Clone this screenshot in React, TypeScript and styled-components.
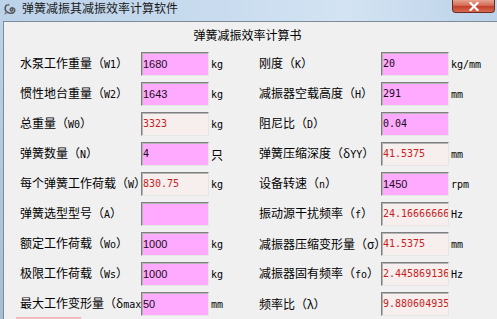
import React from "react";
import styled, { createGlobalStyle } from "styled-components";

const GlobalStyle = createGlobalStyle`
  html, body { margin: 0; padding: 0; background: #f0f0f0; }
  body { font-family: "Noto Sans CJK SC", "Noto Sans", sans-serif; }
`;

const Window = styled.div`
  width: 497px;
  height: 319px;
  overflow: hidden;
  display: flex;
  flex-direction: column;
  background: #f0f0f0;
`;

const TitleBar = styled.div`
  height: 21px;
  flex: none;
  display: flex;
  align-items: flex-start;
  background: linear-gradient(to right, #bcd2e9 0%, #c9dcef 45%, #d3e3f3 70%, #bcd2e9 100%);
`;

const AppIcon = styled.svg`
  width: 14px;
  height: 14px;
  margin: 2px 0 0 3px;
  flex: none;
`;

const TitleText = styled.span`
  margin: 1px 0 0 5px;
  font-size: 12px;
  line-height: 14px;
  color: #1a1a1a;
  white-space: nowrap;
`;

const CloseButton = styled.div`
  margin-left: auto;
  margin-right: 2px;
  width: 43px;
  height: 13px;
  flex: none;
  box-sizing: border-box;
  border: 1px solid #6e2b23;
  border-top: none;
  border-radius: 0 0 4px 4px;
  background: linear-gradient(to bottom, #e8a491 0%, #d46a55 45%, #c2412b 55%, #d86a4f 100%);
  display: flex;
  align-items: center;
  justify-content: center;
`;

const Body = styled.div`
  flex: 1;
  display: flex;
  min-height: 0;
`;

const FrameEdge = styled.div`
  width: 3px;
  flex: none;
  background: linear-gradient(to bottom, #bcd2e9, #a9bdd2);
`;

const Client = styled.div`
  flex: 1;
  border-top: 1px solid #7d8a99;
  border-left: 1px solid #7d8a99;
  background: #f0f0f0;
  display: flex;
  flex-direction: column;
`;

const Heading = styled.div`
  padding-top: 6px;
  height: 14px;
  line-height: 14px;
  font-size: 12px;
  color: #000;
  text-align: center;
  margin-bottom: 10px;
  padding-right: 6px;
`;

const FormGrid = styled.div`
  display: grid;
  grid-template-columns: 121px 68px 50px 122px 68px auto;
  grid-auto-rows: 24px;
  row-gap: 6px;
  padding-left: 16px;
  align-items: center;
`;

const Label = styled.div`
  font-size: 12px;
  line-height: 14px;
  color: #000;
  white-space: nowrap;
  overflow: hidden;
  letter-spacing: 0;
`;

const Latin = styled.span`
  font-family: "DejaVu Sans Mono", "Liberation Mono", monospace;
  font-size: 10px;
`;

const Field = styled.div<{ $readOnly?: boolean; $mono?: boolean }>`
  height: 24px;
  box-sizing: border-box;
  border-style: solid;
  border-width: 1px;
  border-color: #7f7f7f #e6e6e6 #e6e6e6 #7f7f7f;
  box-shadow: inset 1px 1px 0 #b4b4b4;
  background: ${(p) => (p.$readOnly ? "#f7eeee" : "#ffaaff")};
  color: ${(p) => (p.$readOnly ? "#c81e1e" : "#1a0a1a")};
  font-family: ${(p) =>
    p.$mono ? '"DejaVu Sans Mono", "Liberation Mono", monospace' : '"Liberation Sans", Arial, sans-serif'};
  font-size: ${(p) => (p.$mono ? "10px" : "11px")};
  line-height: 22px;
  padding-left: 1px;
  white-space: nowrap;
  overflow: hidden;
`;

const Unit = styled.div<{ $cjk?: boolean }>`
  font-family: ${(p) =>
    p.$cjk ? '"Noto Sans CJK SC", sans-serif' : '"DejaVu Sans Mono", "Liberation Mono", monospace'};
  font-size: ${(p) => (p.$cjk ? "12px" : "10px")};
  padding-left: 2px;
  color: #000;
  white-space: nowrap;
`;

const BottomButton = styled.div`
  margin: 1px 0 0 12px;
  width: 65px;
  height: 20px;
  flex: none;
  background: #f3c4c4;
  border-top: 1px solid #f0b4b4;
`;

type Item = {
  label: string;
  value: string;
  unit?: string;
  readOnly?: boolean;
  mono?: boolean;
};

const leftItems: Item[] = [
  { label: "水泵工作重量（W1）", value: "1680", unit: "kg" },
  { label: "惯性地台重量（W2）", value: "1643", unit: "kg" },
  { label: "总重量（W0）", value: "3323", unit: "kg", readOnly: true, mono: true },
  { label: "弹簧数量（N）", value: "4", unit: "只", mono: true },
  { label: "每个弹簧工作荷载（W）", value: "830.75", unit: "kg", readOnly: true, mono: true },
  { label: "弹簧选型型号（A）", value: "" },
  { label: "额定工作荷载（Wo）", value: "1000", unit: "kg" },
  { label: "极限工作荷载（Ws）", value: "1000", unit: "kg" },
  { label: "最大工作变形量（δmax）", value: "50", unit: "mm" },
];

const rightItems: Item[] = [
  { label: "刚度（K）", value: "20", unit: "kg/mm", mono: true },
  { label: "减振器空载高度（H）", value: "291", unit: "mm", mono: true },
  { label: "阻尼比（D）", value: "0.04", mono: true },
  { label: "弹簧压缩深度（δYY）", value: "41.5375", unit: "mm", readOnly: true, mono: true },
  { label: "设备转速（n）", value: "1450", unit: "rpm" },
  { label: "振动源干扰频率（f）", value: "24.16666666", unit: "Hz", readOnly: true, mono: true },
  { label: "减振器压缩变形量（σ）", value: "41.5375", unit: "mm", readOnly: true, mono: true },
  { label: "减振器固有频率（fo）", value: "2.445869136", unit: "Hz", readOnly: true, mono: true },
  { label: "频率比（λ）", value: "9.880604935", readOnly: true, mono: true },
];

function LabelText({ text }: { text: string }) {
  const parts = text.split(/([A-Za-z0-9]+)/);
  return (
    <Label>
      {parts.map((p, i) => (/^[A-Za-z0-9]+$/.test(p) ? <Latin key={i}>{p}</Latin> : <React.Fragment key={i}>{p}</React.Fragment>))}
    </Label>
  );
}

function Cell({ item }: { item: Item }) {
  return (
    <>
      <LabelText text={item.label} />
      <Field $readOnly={item.readOnly} $mono={item.mono}>
        {item.value}
      </Field>
      <Unit $cjk={item.unit === "只"}>{item.unit ?? ""}</Unit>
    </>
  );
}

export default function App() {
  return (
    <>
      <GlobalStyle />
      <Window>
        <TitleBar>
          <AppIcon viewBox="0 0 14 14">
            <path
              d="M4 3 C2 4 1.5 7 3 9 C4.5 11 8 12 10.5 10.5 C12.5 9 12 6.5 10 6 C8 5.5 6.5 7 7.5 8.5 C8.5 9.5 10 8.5 9.5 7.5"
              fill="none"
              stroke="#5a5a5a"
              strokeWidth="1.6"
              strokeLinecap="round"
            />
            <path d="M4 3 L6 1.5 L6.5 4 Z" fill="#6a6a6a" />
            <path d="M2.5 10 L1 12.5 L4 11.5 Z" fill="#6a6a6a" />
          </AppIcon>
          <TitleText>弹簧减振其减振效率计算软件</TitleText>
          <CloseButton>
            <svg width="10" height="9" viewBox="0 0 10 9">
              <path d="M1.5 1 L8.5 8 M8.5 1 L1.5 8" stroke="#ffffff" strokeWidth="2.2" strokeLinecap="square" />
            </svg>
          </CloseButton>
        </TitleBar>
        <Body>
          <FrameEdge />
          <Client>
            <Heading>弹簧减振效率计算书</Heading>
            <FormGrid>
              {leftItems.map((l, i) => (
                <React.Fragment key={i}>
                  <Cell item={l} />
                  <Cell item={rightItems[i]} />
                </React.Fragment>
              ))}
            </FormGrid>
            <BottomButton />
          </Client>
        </Body>
      </Window>
    </>
  );
}
